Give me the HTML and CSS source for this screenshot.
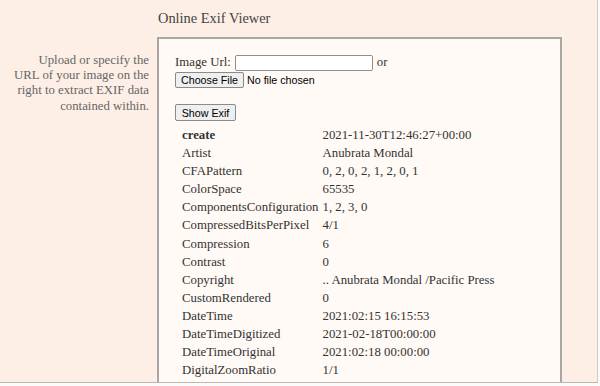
FILE: index.html
```html
<!DOCTYPE html>
<html lang="en">

<head>
    <meta charset="UTF-8">
    <meta name="viewport" content="width=device-width, initial-scale=1.0">
    <title>Online Exif Viewer</title>
    <link rel="stylesheet" href="styles.css">
</head>

<body>
    <div class="page">
        <div class="side">
            <p class="intro">Upload or specify the URL of your image on the right to extract EXIF data contained within.</p>
        </div>

        <div class="main">
            <h1 class="title">Online Exif Viewer</h1>

            <div class="panel">
                <div class="url-row">
                    <span>Image Url:</span>
                    <input type="text" class="url-input">
                    <span class="or">or</span>
                </div>
                <div class="file-row">
                    <button class="btn file-btn">Choose File</button>
                    <span class="file-name">No file chosen</span>
                </div>
                <div class="show-row">
                    <button class="btn show-btn">Show Exif</button>
                </div>

                <table class="exif-table">
                    <tr><td class="key-bold">create</td><td>2021-11-30T12:46:27+00:00</td></tr>
                    <tr><td>Artist</td><td>Anubrata Mondal</td></tr>
                    <tr><td>CFAPattern</td><td>0, 2, 0, 2, 1, 2, 0, 1</td></tr>
                    <tr><td>ColorSpace</td><td>65535</td></tr>
                    <tr><td>ComponentsConfiguration</td><td>1, 2, 3, 0</td></tr>
                    <tr><td>CompressedBitsPerPixel</td><td>4/1</td></tr>
                    <tr><td>Compression</td><td>6</td></tr>
                    <tr><td>Contrast</td><td>0</td></tr>
                    <tr><td>Copyright</td><td>.. Anubrata Mondal /Pacific Press</td></tr>
                    <tr><td>CustomRendered</td><td>0</td></tr>
                    <tr><td>DateTime</td><td>2021:02:15 16:15:53</td></tr>
                    <tr><td>DateTimeDigitized</td><td>2021-02-18T00:00:00</td></tr>
                    <tr><td>DateTimeOriginal</td><td>2021:02:18 00:00:00</td></tr>
                    <tr><td>DigitalZoomRatio</td><td>1/1</td></tr>
                </table>
            </div>
        </div>
    </div>
</body>

</html>
```

FILE: styles.css
```css
body {
    margin: 0;
    background-color: #fafafa;
    font-family: "Liberation Serif", "Times New Roman", serif;
    font-size: 12.8px;
}

.page {
    display: flex;
    width: 597px;
    height: 382px;
    overflow: hidden;
    background-color: #fdefe5;
    border-right: 1px solid #cfcac6;
    border-bottom: 1px solid #bdb8b4;
}

.side {
    width: 149px;
    flex-shrink: 0;
    display: flex;
    justify-content: flex-end;
    align-items: flex-start;
}

.intro {
    width: 138px;
    margin: 53px 0 0 0;
    text-align: right;
    line-height: 15.2px;
    color: #666;
}

.main {
    margin-left: 8px;
}

.title {
    margin: 10px 0 0 1px;
    height: 27px;
    font-size: 14.4px;
    font-weight: normal;
    line-height: 17px;
    color: #444;
}

.panel {
    width: 385px;
    height: 400px;
    padding: 15px 0 0 16px;
    background-color: #fffaf5;
    border: 2px solid #a9a6a3;
    color: #333;
}

.url-row,
.file-row {
    display: flex;
    align-items: center;
    height: 17px;
}

.url-input {
    box-sizing: border-box;
    width: 138px;
    height: 16px;
    margin: 0 0 0 4px;
    padding: 0 2px;
    border: 1px solid #8f8f8f;
    border-radius: 2px;
    background-color: #fff;
}

.or {
    margin-left: 4px;
}

.btn {
    box-sizing: border-box;
    padding: 0;
    white-space: nowrap;
    font-family: "Liberation Sans", Arial, sans-serif;
    font-size: 10.7px;
    line-height: 12px;
    color: #000;
    background-color: #efefef;
    border: 1px solid #8a8a8a;
    border-radius: 2px;
}

.file-btn {
    width: 69px;
    height: 16px;
}

.file-name {
    margin-left: 3px;
    font-family: "Liberation Sans", Arial, sans-serif;
    font-size: 10.7px;
    color: #000;
}

.show-row {
    margin-top: 16px;
    height: 17px;
}

.show-btn {
    width: 61px;
    height: 17px;
}

.exif-table {
    margin: 5px 0 0 5px;
    border-spacing: 1px;
}

.exif-table td {
    padding: 1px;
    line-height: 15.1px;
    white-space: nowrap;
    vertical-align: middle;
}

.exif-table td:first-child {
    padding-right: 2px;
}

.key-bold {
    font-weight: bold;
}
```
